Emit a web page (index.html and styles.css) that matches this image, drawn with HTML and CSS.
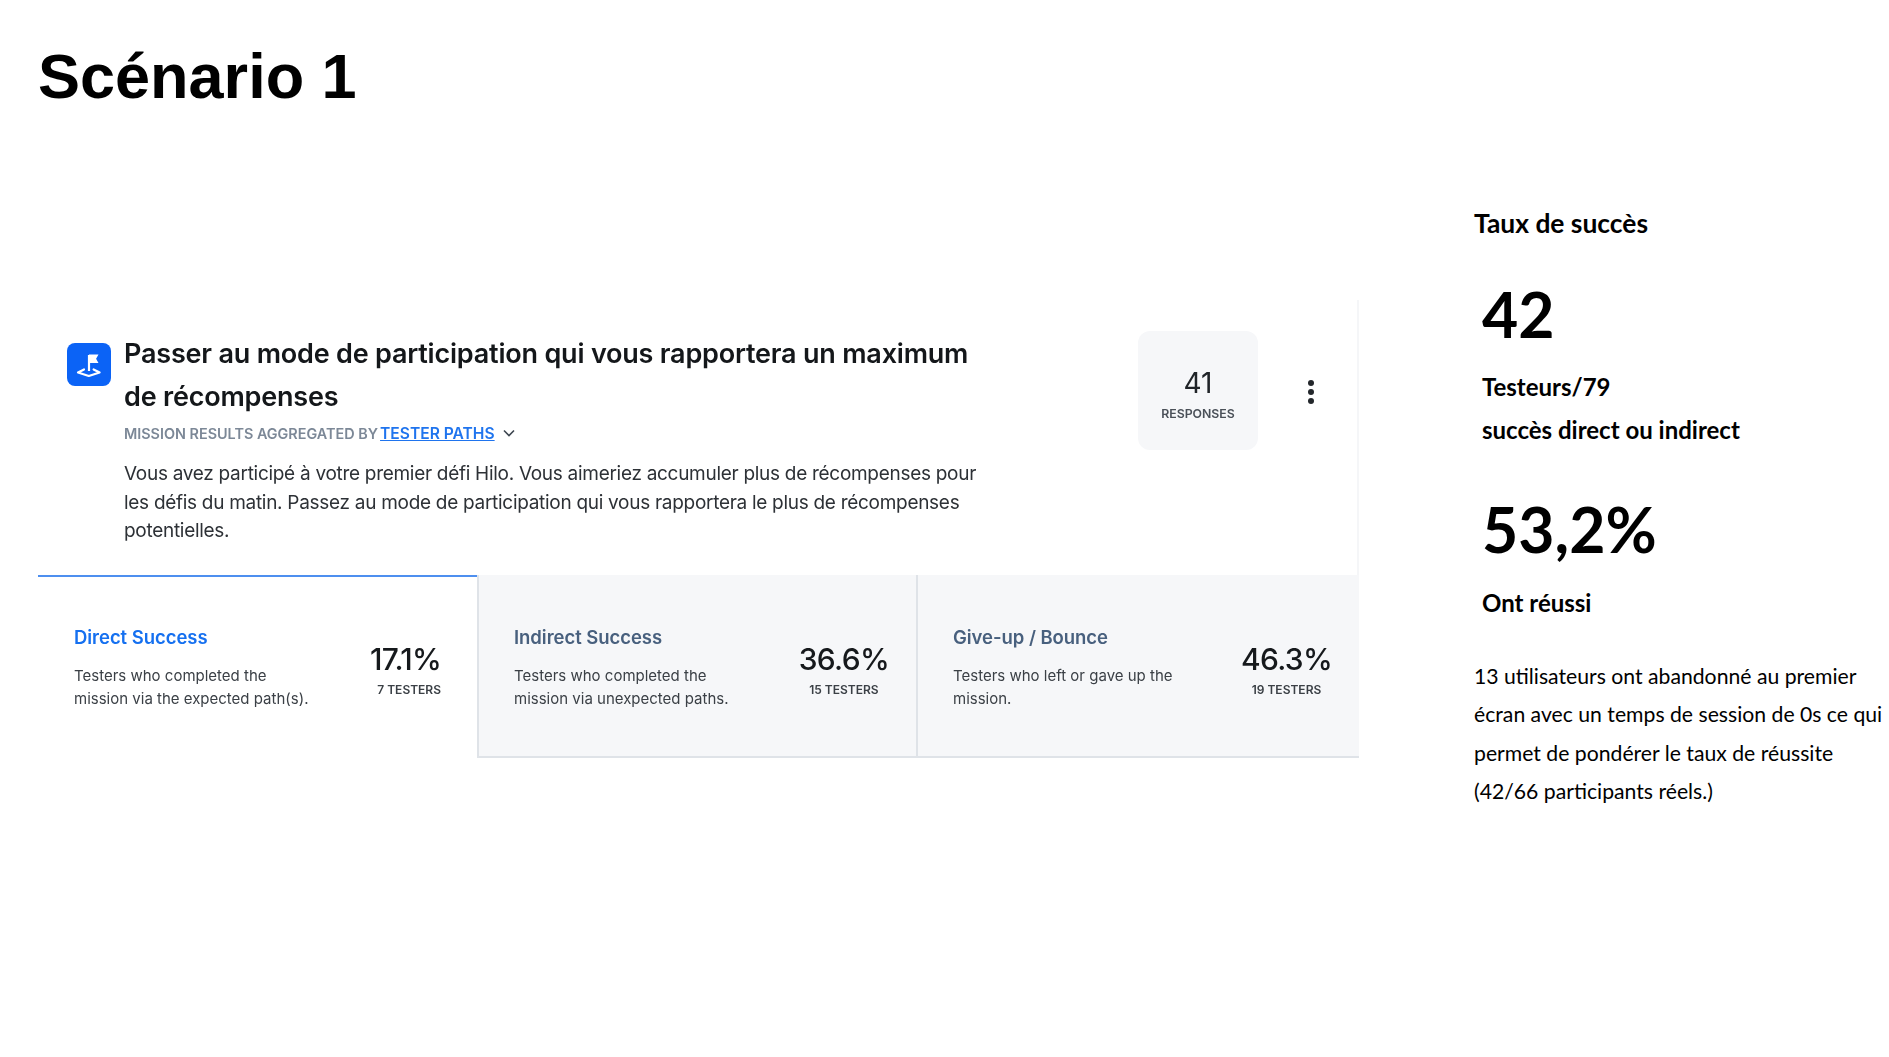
FILE: index.html
```html
<!DOCTYPE html>
<html lang="fr">
<head>
<meta charset="utf-8">
<title>Scénario 1</title>
<link rel="stylesheet" href="styles.css">
</head>
<body>
<h1 class="page-title">Scénario 1</h1>
<main class="layout">
  <section class="card">
    <div class="card-head">
      <div class="mission-icon">
        <svg viewBox="0 0 44 44" width="44" height="44" fill="none">
          <path d="M22 28V12" stroke="#fff" stroke-width="2.2"/>
          <path d="M22 11.500h9.500l-2.400 4.200 2.400 4.300H22z" fill="#fff"/>
          <path d="M17 26.500l-6 3 10.800 3.500 10.800-3.500-6-3" stroke="#fff" stroke-width="2.200" stroke-linejoin="round" stroke-linecap="round"/>
        </svg>
      </div>
      <div class="mission-text">
        <h2 class="mission-title">Passer au mode de participation qui vous rapportera un maximum de récompenses</h2>
        <div class="meta">
          <span>MISSION RESULTS AGGREGATED BY</span>
          <a class="meta-link" href="#">TESTER PATHS</a>
          <svg class="chevron" viewBox="0 0 12 8" width="12" height="8" fill="none"><path d="M1 1.500l5 5 5-5" stroke="#3d4650" stroke-width="1.600"/></svg>
        </div>
        <p class="mission-desc">Vous avez participé à votre premier défi Hilo. Vous aimeriez accumuler plus de récompenses pour les défis du matin. Passez au mode de participation qui vous rapportera le plus de récompenses potentielles.</p>
      </div>
      <div class="responses">
        <span class="responses-num">41</span>
        <span class="responses-label">RESPONSES</span>
      </div>
      <div class="kebab"><i></i><i></i><i></i></div>
    </div>
    <div class="tabs">
      <article class="tab tab-active">
        <div class="tab-text">
          <h3 class="tab-title">Direct Success</h3>
          <p class="tab-desc">Testers who completed the mission via the expected path(s).</p>
        </div>
        <div class="tab-stat"><b class="pct">17.1%</b><span class="count">7 TESTERS</span></div>
      </article>
      <article class="tab">
        <div class="tab-text">
          <h3 class="tab-title">Indirect Success</h3>
          <p class="tab-desc">Testers who completed the mission via unexpected paths.</p>
        </div>
        <div class="tab-stat"><b class="pct">36.6%</b><span class="count">15 TESTERS</span></div>
      </article>
      <article class="tab">
        <div class="tab-text">
          <h3 class="tab-title">Give-up / Bounce</h3>
          <p class="tab-desc">Testers who left or gave up the mission.</p>
        </div>
        <div class="tab-stat"><b class="pct">46.3%</b><span class="count">19 TESTERS</span></div>
      </article>
    </div>
  </section>
  <aside class="summary">
    <h2 class="summary-title">Taux de succès</h2>
    <div class="summary-group">
      <div class="big first">42</div>
      <p class="strong lead">Testeurs/79</p>
      <p class="strong">succès direct ou indirect</p>
      <div class="big second">53,2%</div>
      <p class="strong outcome">Ont réussi</p>
    </div>
    <p class="note">13 utilisateurs ont abandonné au premier écran avec un temps de session de 0s ce qui permet de pondérer le taux de réussite (42/66 participants réels.)</p>
  </aside>
</main>
</body>
</html>
```
FILE: styles.css
```css
* { box-sizing: border-box; }
html, body { margin: 0; padding: 0; background: #fff; }
body { width: 1889px; height: 1057px; overflow: hidden; color: #000; }

.page-title {
  margin: 0;
  padding: 38px 0 0 38px;
  font: 700 63px/76px "Liberation Sans", Arial, sans-serif;
}

.layout { display: flex; align-items: flex-start; padding-left: 38px; }

.card {
  width: 1321px;
  margin-top: 186px;
  border-right: 2px solid #f5f6f8;
  font-family: Inter, Roboto, sans-serif;
  filter: blur(0.4px);
}

.card-head { display: flex; align-items: flex-start; height: 275px; padding: 32px 0 0 29px; }

.mission-icon {
  flex: none;
  width: 44px;
  height: 43px;
  margin-top: 11px;
  border-radius: 8px;
  background: #0b63f6;
}
.mission-icon svg { display: block; }

.mission-text { flex: none; width: 880px; margin-left: 13px; }
.mission-title {
  margin: 0;
  width: 860px;
  font-size: 27px;
  font-weight: 600;
  line-height: 43px;
  letter-spacing: -0.2px;
  color: #14171a;
}

.meta { display: flex; align-items: center; height: 22px; margin-top: 4px; font-size: 14.4px; font-weight: 600; color: #7c8897; }
.meta-link { margin-left: 2px; color: #1f74ee; text-decoration: underline; font-size: 15.6px; }
.chevron { margin-left: 8px; }

.mission-desc { margin: 16px 0 0; width: 860px; font-size: 19px; letter-spacing: -0.29px; line-height: 28.5px; color: #2d3136; }

.responses {
  flex: none;
  display: flex;
  flex-direction: column;
  align-items: center;
  width: 120px;
  height: 119px;
  margin-left: 134px;
  margin-top: -1px;
  padding-top: 35px;
  border-radius: 12px;
  background: #f6f7f9;
}
.responses-num { font-size: 28px; line-height: 34px; color: #202428; }
.responses-label { margin-top: 6px; font-size: 12.3px; line-height: 16px; font-weight: 600; color: #4a5058; }

.kebab { flex: none; display: flex; flex-direction: column; gap: 3px; margin: 48px 0 0 50px; }
.kebab i { display: block; width: 6px; height: 6px; border-radius: 50%; background: #23272b; }

.tabs { display: grid; grid-template-columns: 439px 439px 443px; height: 183px; }

.tab {
  display: flex;
  justify-content: space-between;
  padding: 50px 27px 0 35px;
  background: #f6f7f9;
  border-bottom: 2px solid #dfe3e8;
  border-left: 2px solid #dfe3e8;
}
.tab-active {
  background: #fff;
  border-top: 2px solid #4e8fef;
  border-bottom: 0;
  border-left: 0;
  padding: 48px 36px 0 36px;
}

.tab-text { width: 250px; }
.tab-title { margin: 0; font-size: 18.5px; font-weight: 600; line-height: 24px; color: #48607e; letter-spacing: -0.05px; }
.tab-active .tab-title { color: #1570f0; }
.tab-desc { margin: 16px 0 0; font-size: 15px; line-height: 22.5px; color: #3b4046; }

.tab-stat { display: flex; flex-direction: column; align-items: center; padding-top: 16px; }
.tab-active .tab-stat { align-items: flex-end; }
.pct { font-size: 30px; font-weight: 500; line-height: 36px; color: #16191c; letter-spacing: -0.7px; }
.count { margin-top: 5px; font-size: 12px; font-weight: 600; line-height: 16px; color: #3b4046; }

.summary { flex: none; width: 418px; margin: 90px 0 0 115px; font-family: Lato, sans-serif; }
.summary-title { margin: 0; font-size: 26.4px; font-weight: 700; line-height: 38px; }

.summary-group { padding-left: 8px; }
.big { font-weight: 700; font-size: 62.5px; line-height: 76px; }
.big.first { margin-top: 34px; }
.big.second { margin-top: 40px; }
.strong { margin: 0; font-size: 24px; font-weight: 700; line-height: 43px; }
.lead { margin-top: 13px; }
.outcome { margin-top: 14px; }

.note { margin: 33px 0 0; font-size: 21.2px; line-height: 38.3px; }
```
